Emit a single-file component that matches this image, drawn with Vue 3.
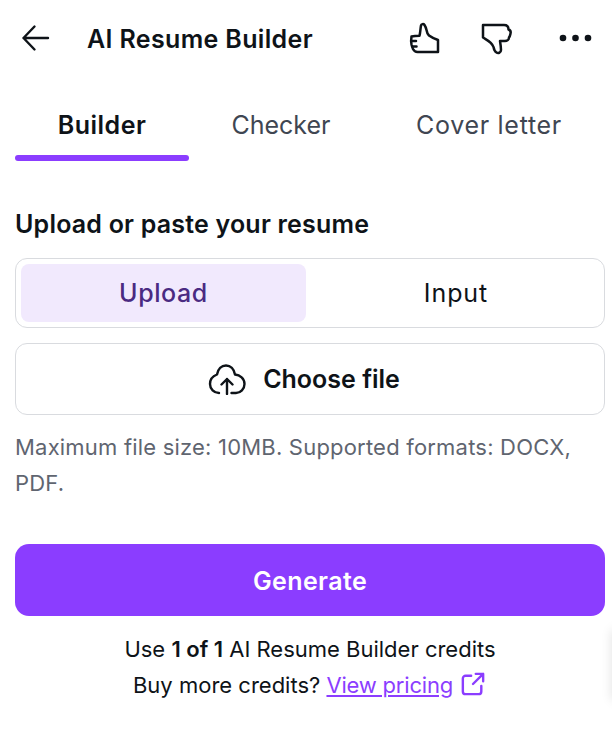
<script setup>
const tabs = [
  { label: 'Builder', active: true },
  { label: 'Checker', active: false },
  { label: 'Cover letter', active: false }
]
</script>

<template>
  <div class="page">
    <header class="header">
      <svg class="back" width="30" height="28" viewBox="0 0 30 28" fill="none" stroke="#0e1318" stroke-width="2.4" stroke-linecap="round" stroke-linejoin="round">
        <path d="M2.500 14H27M13.500 2.500 2.500 14l11 11.500" />
      </svg>
      <h1 class="title">AI Resume Builder</h1>
      <div class="actions">
        <svg class="thumb" width="32" height="32" viewBox="0 0 32 32" fill="none" stroke="#0e1318" stroke-width="2.500" stroke-linejoin="round" stroke-linecap="round">
          <path d="M12 3.500c.3-1.500 2.500-2 3.500-.5 1 1.500 1.500 3 2 5 .5 3 1 4 2.500 5.500 2 1.500 5 3 9 4.500V30H8.500c-2 0-3.500-1-4.500-3-.5-1.500-1-2.500-1.500-4.500-.5-2.500-.5-5 0-8 2-.5 5-.8 8-.8.8-3 .8-6.500 1.500-10.200Z" />
          <path d="M3 19h4M3.500 24.500h4" />
        </svg>
        <svg class="thumb-down" width="32" height="33" viewBox="0 0 32 33" fill="none" stroke="#0e1318" stroke-width="2.500" stroke-linejoin="round" stroke-linecap="round">
          <path d="M2 2h21c3 0 4.500 1.500 4.500 4.500 1.500.5 2.500 2 2 4-.3 1.500-.5 3-1.500 4 0 2-2 3.500-4 3.500h-5c.5 3 1 6 1 9 0 3-3 3.500-4.500 2.500-2-1-2.500-3-3-5.500C11 19 6 17 2 14.500Z" />
        </svg>
        <svg class="more" width="33" height="8" viewBox="0 0 33 8" fill="#0e1318">
          <circle cx="4" cy="4" r="3.300" /><circle cx="16.500" cy="4" r="3.300" /><circle cx="29" cy="4" r="3.300" />
        </svg>
      </div>
    </header>

    <nav class="tabs">
      <div v-for="tab in tabs" :key="tab.label" class="tab" :class="{ active: tab.active }">{{ tab.label }}</div>
    </nav>

    <h2 class="heading">Upload or paste your resume</h2>

    <div class="segment">
      <div class="seg-item seg-on">Upload</div>
      <div class="seg-item seg-off">Input</div>
    </div>

    <button class="choose">
      <svg width="38" height="32" viewBox="0 0 38 32" fill="none" stroke="#0e1318" stroke-width="2.400" stroke-linecap="round" stroke-linejoin="round">
        <path d="M11 30C6 30 2 26 2 21c0-4.500 3-8 7-9.500C10 6 13.500 2.500 18 2.500s8 3.500 9 9c5 .5 9.500 4 9.500 9.500 0 5-4 9-8.500 9h-4.500" />
        <path d="M19 31V16M13.500 21.500 19 16l5.500 5.500" />
      </svg>
      <span>Choose file</span>
    </button>

    <p class="hint">Maximum file size: 10MB. Supported formats: DOCX, PDF.</p>

    <button class="generate">Generate</button>

    <p class="credits">Use <b>1 of 1</b> AI Resume Builder credits</p>
    <p class="credits">
      Buy more credits? <a class="link">View pricing</a>
      <svg class="ext" width="24" height="24" viewBox="0 0 26 26" fill="none" stroke="#8b3dff" stroke-width="2.600" stroke-linecap="round" stroke-linejoin="round">
        <path d="M11 4H5a3 3 0 0 0-3 3v14a3 3 0 0 0 3 3h14a3 3 0 0 0 3-3v-6M13 13 24 2M16 2h8v8" />
      </svg>
    </p>
    <div class="edge"></div>
  </div>
</template>

<style>
html, body { background: #fff; }
</style>

<style scoped>
.page {
  position: relative;
  width: 612px;
  height: 736px;
  overflow: hidden;
  box-sizing: border-box;
  padding: 0 7px 0 15px;
  font-family: Inter, sans-serif;
  color: #0e1318;
  background: #fff;
}
.header { display: flex; align-items: center; height: 76px; }
.back { margin: 0 0 0 6px; flex: none; }
.title { margin: 1px 0 0 36px; font-size: 25px; font-weight: 600; line-height: 32px; letter-spacing: .35px; }
.actions { margin-left: auto; display: flex; align-items: center; padding-right: 13px; }
.thumb-down { margin-left: 40px; margin-top: 2px; }
.more { margin-left: 46px; }
.tabs { display: grid; grid-template-columns: 174px 184px 232px; height: 85px; }
.tab {
  box-sizing: border-box;
  height: 85px;
  padding-top: 33px;
  text-align: center;
  font-size: 25px;
  line-height: 32px;
  color: #3f4652;
  position: relative;
  white-space: nowrap;
}
.tab:nth-child(3) { letter-spacing: .7px; }
.tab.active { color: #0e1318; font-weight: 600; letter-spacing: .5px; }
.tab.active::after {
  content: "";
  position: absolute;
  left: 0;
  right: 0;
  bottom: 0;
  height: 6px;
  border-radius: 3px;
  background: #8b3dff;
}
.heading { margin: 47px 0 0; font-size: 25px; font-weight: 600; line-height: 32px; letter-spacing: .2px; }
.segment {
  margin-top: 18px;
  height: 70px;
  box-sizing: border-box;
  border: 1px solid #d9dbdf;
  border-radius: 12px;
  padding: 5px;
  display: flex;
  gap: 1px;
}
.seg-item { flex: 1; display: flex; align-items: center; justify-content: center; font-size: 25px; letter-spacing: .6px; border-radius: 8px; }
.seg-on { flex: 0 0 285px; background: #f1e9fd; color: #4a2a82; font-weight: 500; }
.seg-off { padding-left: 6px; letter-spacing: .9px; }
.choose {
  margin-top: 15px;
  width: 100%;
  height: 72px;
  border: 1px solid #d9dbdf;
  border-radius: 12px;
  background: #fff;
  display: flex;
  align-items: center;
  justify-content: center;
  gap: 17px;
  font: 600 25px Inter, sans-serif;
  color: #0e1318;
}
.choose span { margin-right: 12px; }
.hint { margin: 14px 0 0; font-size: 22px; letter-spacing: .2px; line-height: 36px; color: #5f6570; }
.generate {
  margin-top: 43px;
  padding-top: 2px;
  width: 100%;
  height: 72px;
  border: 0;
  border-radius: 14px;
  background: #8b3dff;
  color: #fff;
  font: 600 25px Inter, sans-serif;
  letter-spacing: .4px;
}
.credits { margin: 0; text-align: center; font-size: 22px; line-height: 36px; }
.generate + .credits { margin-top: 15px; }
.credits b { font-weight: 600; }
.link { color: #8b3dff; text-decoration: underline; letter-spacing: -.2px; }
.ext { vertical-align: -3px; margin: 0 2px 0 8px; }
.edge {
  position: absolute;
  right: -14px;
  top: 630px;
  width: 14px;
  height: 70px;
  box-shadow: 0 0 12px rgba(0,0,0,.12);
}
</style>
